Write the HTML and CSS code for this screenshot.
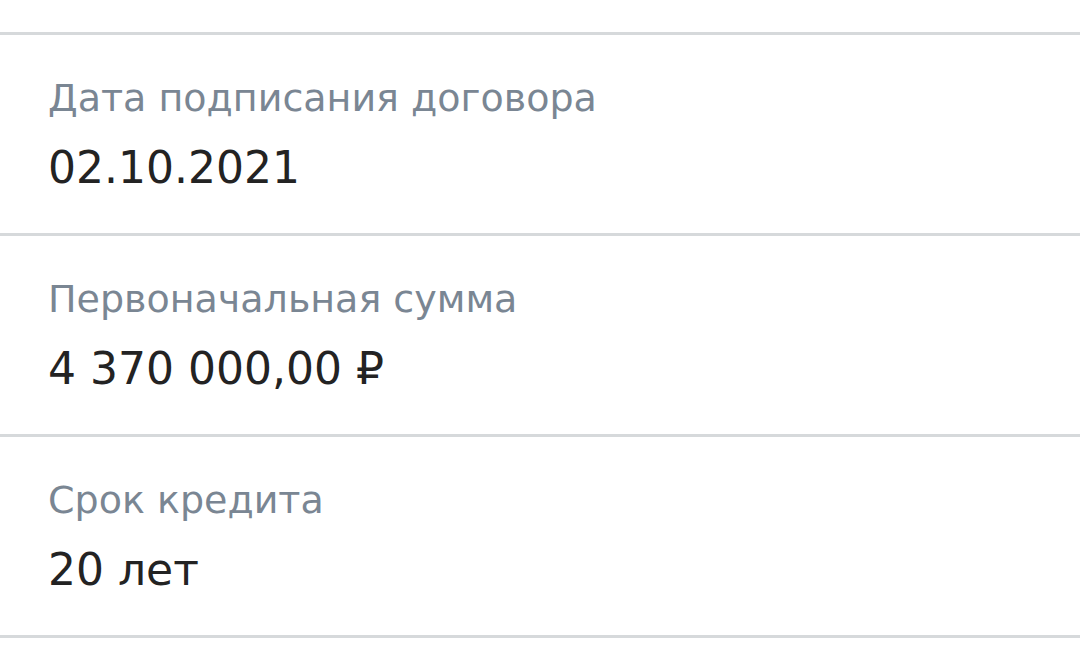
FILE: index.html
```html
<!DOCTYPE html>
<html lang="ru">
<head>
<meta charset="utf-8">
<link rel="stylesheet" href="styles.css">
</head>
<body>
<div class="list">
  <div class="top-spacer"></div>
  <div class="item">
    <div class="label">Дата подписания договора</div>
    <div class="value">02.10.2021</div>
  </div>
  <div class="item">
    <div class="label">Первоначальная сумма</div>
    <div class="value">4 370 000,00 ₽</div>
  </div>
  <div class="item">
    <div class="label">Срок кредита</div>
    <div class="value">20 лет</div>
  </div>
  <div class="item last"></div>
</div>
</body>
</html>
```
FILE: styles.css
```css
html, body {
  margin: 0;
  padding: 0;
  background: #ffffff;
}
body {
  font-family: "DejaVu Sans", sans-serif;
  width: 1080px;
  height: 645px;
  overflow: hidden;
}
.list {
  display: flex;
  flex-direction: column;
}
.top-spacer {
  height: 32px;
}
.item {
  border-top: 3px solid #d6d9db;
  height: 198px;
  padding: 0 48px;
  display: flex;
  flex-direction: column;
  justify-content: flex-start;
}
.label {
  margin-top: 37px;
  font-size: 38px;
  line-height: 52px;
  color: #7a8693;
}
.value {
  margin-top: 17px;
  font-size: 44px;
  line-height: 54px;
  color: #232323;
}
.item.last {
  height: 10px;
}
```
